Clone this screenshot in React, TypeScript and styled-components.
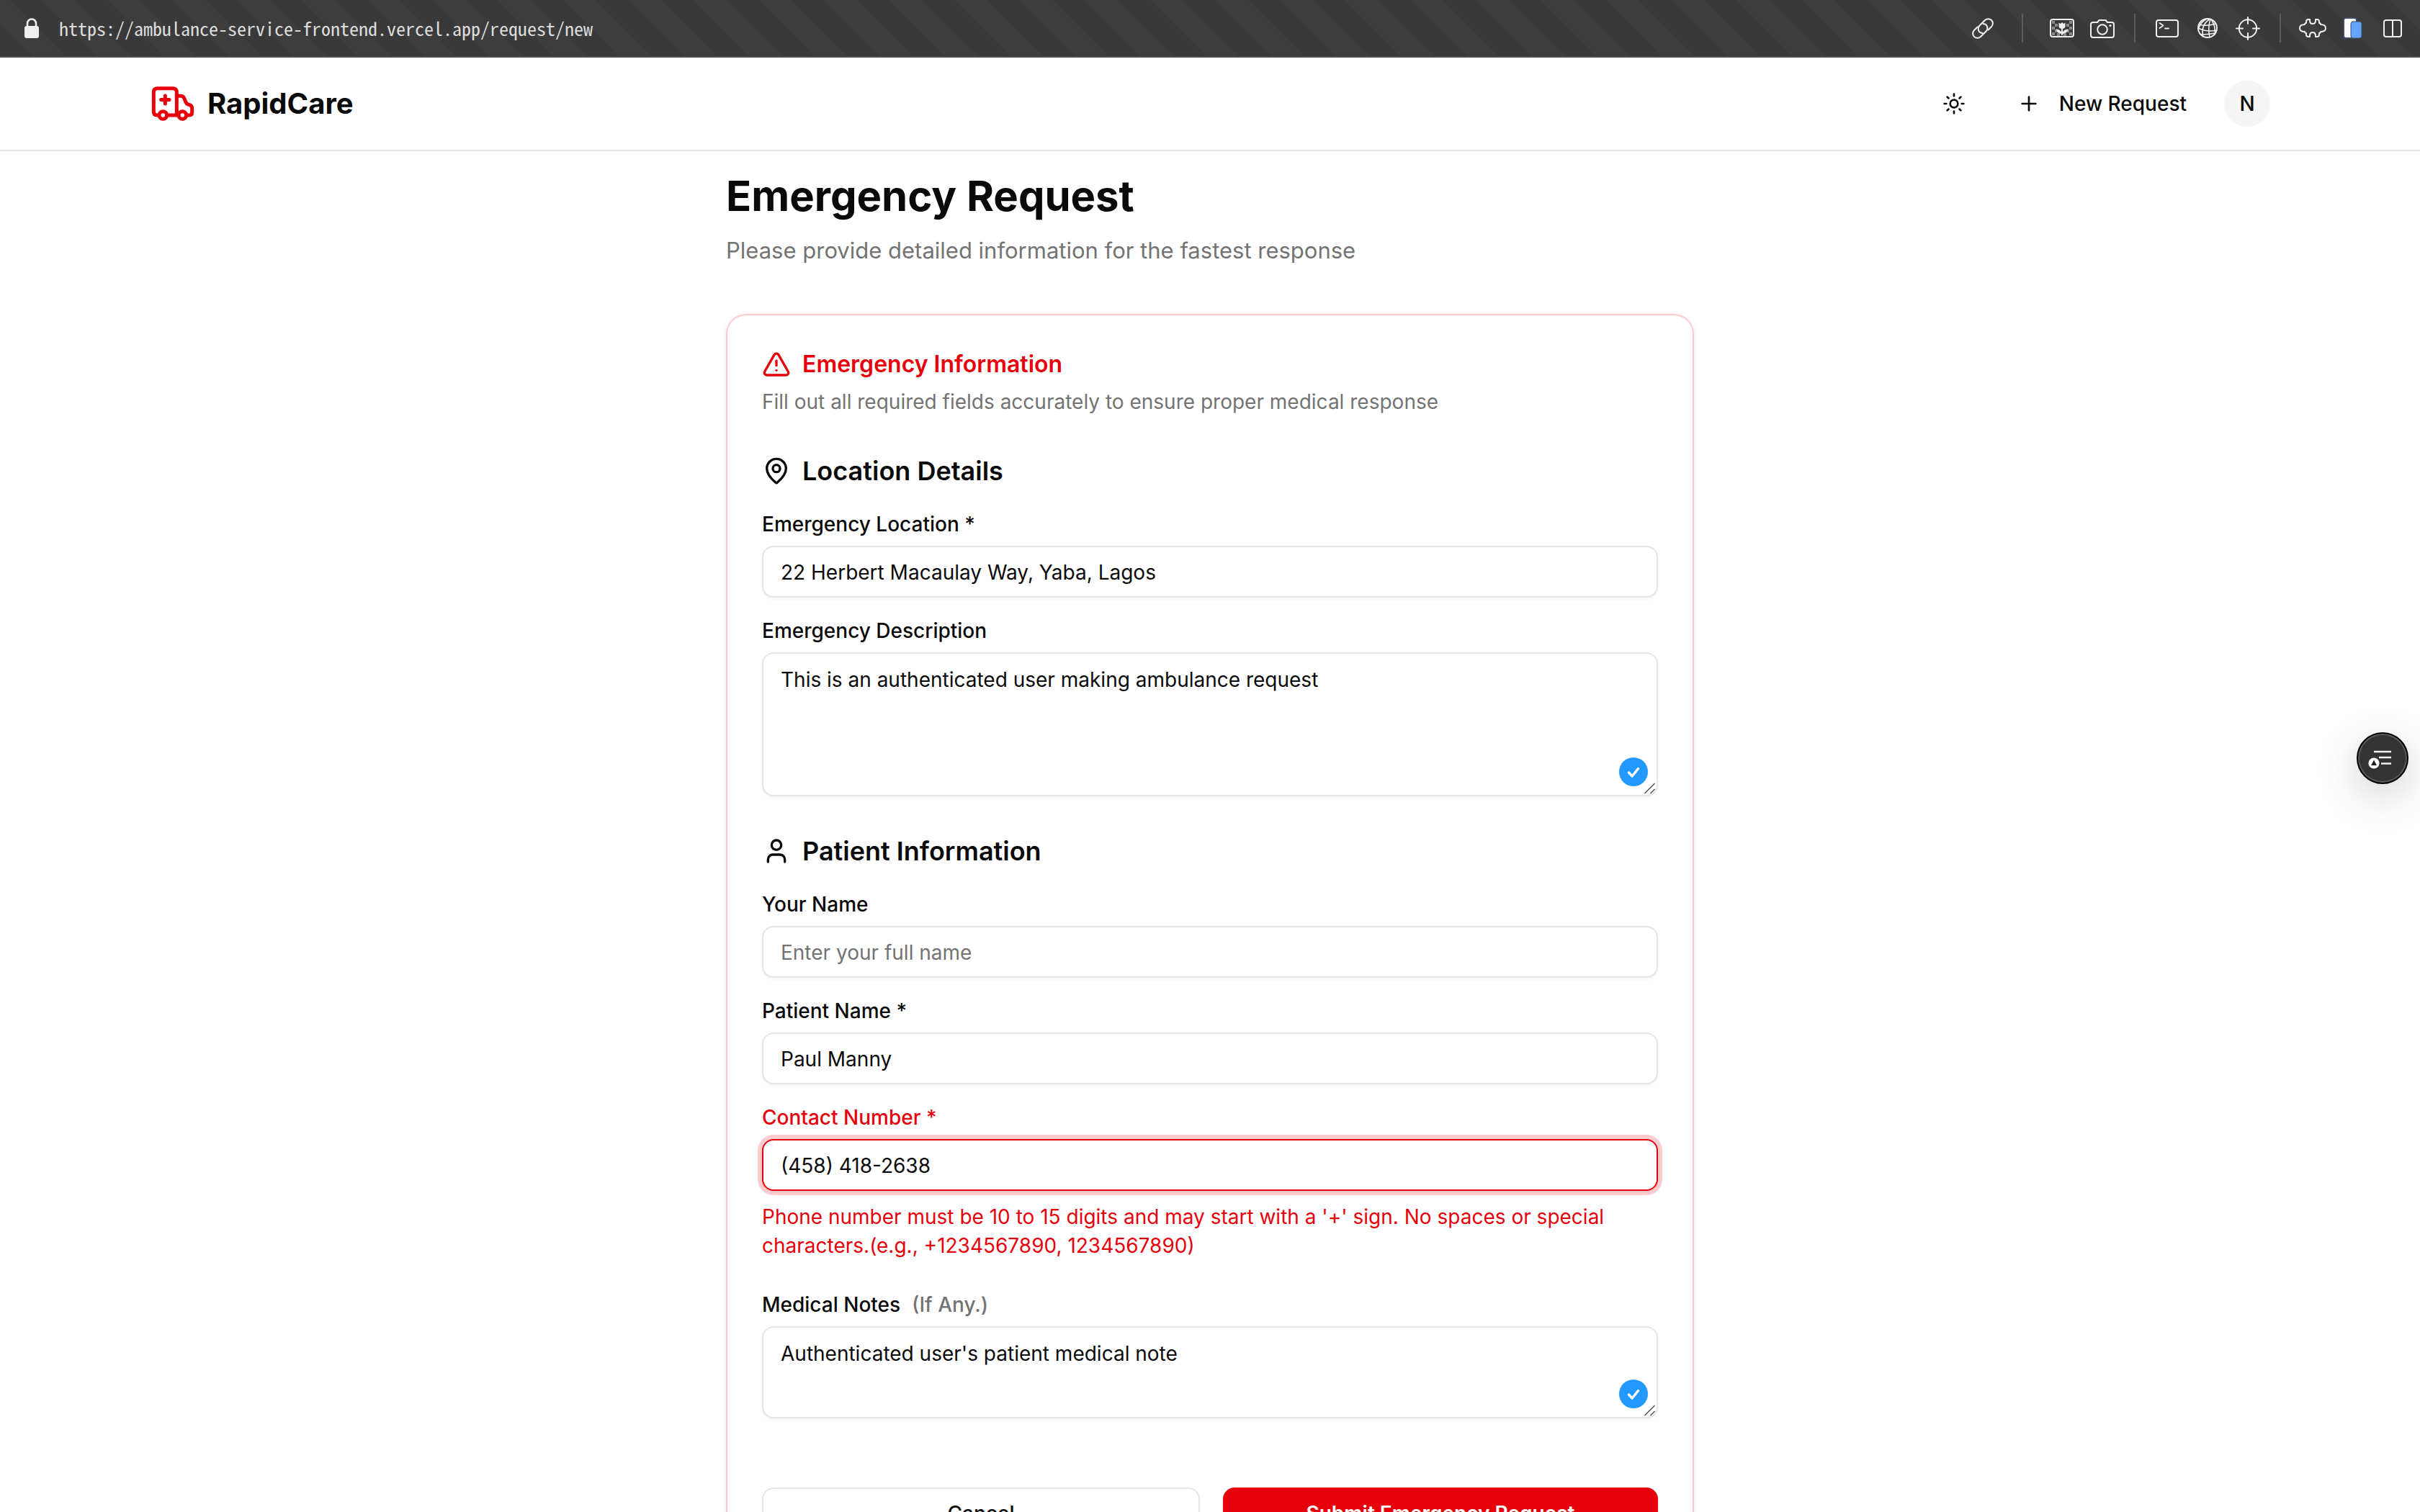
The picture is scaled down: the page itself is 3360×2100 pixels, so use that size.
import React, { useState } from 'react';
import styled, { createGlobalStyle } from 'styled-components';
import { MapPin, Plus, Sun, TriangleAlert, User } from 'lucide-react';

const color = {
  text: '#0a0a0a',
  muted: '#737373',
  red: '#e7000b',
  border: '#e5e5e5',
  cardBorder: '#ffc9c9',
  soft: '#f5f5f5',
  blue: '#2399ff',
};

const GlobalStyle = createGlobalStyle`
  *, *::before, *::after { box-sizing: border-box; }
  body {
    margin: 0;
    background: #fff;
    color: ${color.text};
    font-family: Inter, "Liberation Sans", sans-serif;
    font-size: 28px;
    line-height: 40px;
    -webkit-font-smoothing: antialiased;
  }
  h1, h2, h3, p { margin: 0; }
  button, input, textarea { font: inherit; color: inherit; }
`;

const Shell = styled.div`
  display: flex;
  flex-direction: column;
  height: 100vh;
  overflow: hidden;
`;

const AddressBar = styled.div`
  display: flex;
  flex: none;
  align-items: center;
  height: 80px;
  padding: 0 17px 0 32px;
  border-bottom: 2px solid #4d4d4d;
  color: #efefef;
  background: repeating-linear-gradient(45deg, #393939 0 32px, #3d3d3d 32px 64px);
`;

const Address = styled.div`
  flex: 1;
  margin-left: 26px;
  color: #dcdcdc;
  font-family: "Noto Sans Mono CJK SC", "DejaVu Sans Mono", monospace;
  font-size: 26px;
  line-height: 32px;
  white-space: nowrap;
`;

const Tools = styled.div`
  display: flex;
  align-items: center;
  gap: 16px;
`;

const ToolButton = styled.button`
  display: flex;
  width: 40px;
  height: 40px;
  padding: 0;
  border: 0;
  background: none;
`;

const ToolDivider = styled.span<{ $space: number }>`
  width: 2px;
  height: 40px;
  margin: 0 ${(p) => p.$space}px;
  background: #5c5c5c;
`;

const Header = styled.header`
  flex: none;
  border-bottom: 2px solid ${color.border};
`;

const HeaderInner = styled.div`
  display: flex;
  align-items: center;
  justify-content: space-between;
  max-width: 3072px;
  height: 128px;
  margin: 0 auto;
  padding: 0 64px;
`;

const Brand = styled.a`
  display: flex;
  align-items: center;
  gap: 16px;
  color: inherit;
  font-size: 40px;
  font-weight: 700;
  line-height: 56px;
  text-decoration: none;
`;

const Nav = styled.nav`
  display: flex;
  align-items: center;
  gap: 28px;
`;

const IconButton = styled.button`
  display: flex;
  align-items: center;
  justify-content: center;
  width: 72px;
  height: 72px;
  padding: 0;
  border: 0;
  background: none;
`;

const NavLink = styled.a`
  display: flex;
  align-items: center;
  gap: 26px;
  height: 72px;
  padding: 0 24px;
  color: inherit;
  font-weight: 500;
  text-decoration: none;
`;

const Avatar = styled.button`
  width: 64px;
  height: 64px;
  padding: 0;
  border: 0;
  border-radius: 50%;
  background: ${color.soft};
  font-weight: 500;
`;

const Main = styled.main`
  flex: 1;
  min-height: 0;
  overflow: hidden;
  padding: 26px 32px 64px;
`;

const Column = styled.div`
  max-width: 1344px;
  margin: 0 auto;
`;

const PageTitle = styled.h1`
  font-size: 58px;
  font-weight: 700;
  line-height: 72px;
`;

const PageLead = styled.p`
  margin-top: 16px;
  color: ${color.muted};
  font-size: 31px;
  line-height: 48px;
`;

const Card = styled.section`
  margin-top: 64px;
  padding: 48px;
  border: 2px solid ${color.cardBorder};
  border-radius: 28px;
  box-shadow: 0 2px 6px rgba(0, 0, 0, 0.1);
`;

const CardTitle = styled.h2`
  display: flex;
  align-items: center;
  gap: 16px;
  color: ${color.red};
  font-size: 32px;
  font-weight: 600;
  line-height: 40px;
`;

const CardLead = styled.p`
  margin-top: 12px;
  color: ${color.muted};
`;

const Form = styled.form`
  display: flex;
  flex-direction: column;
  gap: 48px;
  margin-top: 48px;
`;

const Group = styled.div`
  display: flex;
  flex-direction: column;
  gap: 32px;
`;

const GroupTitle = styled.h3`
  display: flex;
  align-items: center;
  gap: 16px;
  font-size: 36px;
  font-weight: 600;
  line-height: 56px;
`;

const FieldBox = styled.div`
  display: flex;
  flex-direction: column;
  gap: 16px;
`;

const Label = styled.label<{ $invalid?: boolean }>`
  display: flex;
  gap: 16px;
  color: ${(p) => (p.$invalid ? color.red : 'inherit')};
  font-weight: 500;
  line-height: 28px;
`;

const Hint = styled.span`
  color: ${color.muted};
`;

const TextBox = styled.input<{ $invalid?: boolean }>`
  width: 100%;
  height: 72px;
  padding: 2px 24px 0;
  border: 2px solid ${(p) => (p.$invalid ? color.red : color.border)};
  border-radius: 16px;
  outline: 0;
  background: #fff;
  box-shadow: ${(p) => (p.$invalid ? '0 0 0 6px rgba(231, 0, 11, 0.2), ' : '')}0 2px 4px rgba(0, 0, 0, 0.05);
  &::placeholder { color: ${color.muted}; opacity: 1; }
`;

const AreaWrap = styled.div`
  position: relative;
  display: flex;
`;

const Area = styled.textarea<{ $height: number }>`
  width: 100%;
  height: ${(p) => p.$height}px;
  padding: 16px 24px;
  border: 2px solid ${color.border};
  border-radius: 16px;
  outline: 0;
  background: #fff;
  box-shadow: 0 2px 4px rgba(0, 0, 0, 0.05);
  resize: none;
`;

const CheckBadge = styled.span`
  position: absolute;
  right: 14px;
  bottom: 14px;
  display: flex;
  width: 40px;
  height: 40px;
  border-radius: 50%;
  background: ${color.blue};
`;

const Grip = styled.svg`
  position: absolute;
  right: 2px;
  bottom: 2px;
`;

const ErrorText = styled.p`
  color: ${color.red};
`;

const Actions = styled.div`
  display: flex;
  gap: 32px;
  padding-top: 48px;
`;

const ActionButton = styled.button<{ $primary?: boolean }>`
  flex: 1;
  height: 72px;
  border: ${(p) => (p.$primary ? '0' : `2px solid ${color.border}`)};
  border-radius: 16px;
  background: ${(p) => (p.$primary ? color.red : '#fff')};
  color: ${(p) => (p.$primary ? '#fff' : color.text)};
  font-weight: ${(p) => (p.$primary ? 600 : 500)};
`;

const FloatingButton = styled.button`
  position: fixed;
  top: calc(50% - 33px);
  right: 16px;
  display: flex;
  width: 72px;
  height: 72px;
  padding: 0;
  border: 2px solid #000;
  border-radius: 50%;
  background: #333;
  box-shadow: inset 0 0 0 2px #5a5a5a, 0 16px 60px rgba(0, 0, 0, 0.2);
`;

const LockIcon = () => (
  <svg width="24" height="32" viewBox="0 0 24 32" fill="none">
    <rect x="2" y="13" width="20" height="17" rx="3" fill="#efefef" />
    <path d="M6 14V9.5a6 6 0 0 1 12 0V14" stroke="#efefef" strokeWidth="2.6" />
  </svg>
);

const AmbulanceIcon = () => (
  <svg
    width="64"
    height="64"
    viewBox="54 36 192 192"
    fill="none"
    stroke={color.red}
    strokeWidth="15"
    strokeLinecap="round"
    strokeLinejoin="round"
  >
    <path d="M90 180h-6q-14 0-14-14V84q0-16 16-16h64q16 0 16 16v92" />
    <path d="M127 180h44" />
    <path d="M166 100h17q10 0 14 9l7 17q3 7 10 9l6 2q10 4 10 14v17q0 12-12 12h-8" />
    <circle cx="109" cy="180" r="16" />
    <circle cx="190" cy="180" r="16" />
    <path d="M118 99v33M101 115.500h34" />
  </svg>
);

type GlyphProps = { children: React.ReactNode };

const Glyph = ({ children }: GlyphProps) => (
  <svg
    width="40"
    height="40"
    viewBox="0 0 40 40"
    fill="none"
    stroke="#efefef"
    strokeWidth="2"
    strokeLinecap="round"
    strokeLinejoin="round"
  >
    {children}
  </svg>
);

const LinkGlyph = () => (
  <Glyph>
    <path d="M12.500 18.500 8 23a6.300 6.300 0 0 0 9 9l7.500-7.500a6.300 6.300 0 0 0 0-9q-1.500-1.300-4-1.500" />
    <path d="M27.500 22.500 32 18a6.300 6.300 0 0 0-9-9l-7.500 7.500a6.300 6.300 0 0 0 0 9q1.500 1.300 4 1.500" />
  </Glyph>
);

const checks = [
  [7, 11], [31, 11], [11, 15], [27, 15], [7, 19], [31, 19],
  [11, 23], [27, 23], [7, 27], [31, 27], [23, 28], [14, 28],
];

const ImageGlyph = () => (
  <Glyph>
    {checks.map(([x, y]) => (
      <rect key={`${x}-${y}`} x={x - 1} y={y - 1} width="4" height="4" fill="#8a8a8a" stroke="none" />
    ))}
    <rect x="4" y="8" width="32" height="24" rx="3" />
    <path d="M15.500 12.500l2.500 1.500 2-2 2 2 2.500-1.500v4.500q0 4-4.500 4t-4.500-4z" fill="#efefef" stroke="none" />
    <path d="M20 20v9" />
    <path d="M20 28q-7 0-8.500-6.500 7 0 8.500 6.500zM20 28q7 0 8.500-6.500-7 0-8.500 6.500z" fill="#efefef" stroke="none" />
  </Glyph>
);

const CameraGlyph = () => (
  <Glyph>
    <path d="M7 12h6l2.500-3h9l2.500 3h6q3 0 3 3v15q0 3-3 3H7q-3 0-3-3V15q0-3 3-3z" />
    <circle cx="20" cy="22" r="6.800" />
    <circle cx="31" cy="16.500" r="1.600" fill="#efefef" stroke="none" />
  </Glyph>
);

const TerminalGlyph = () => (
  <Glyph>
    <rect x="5" y="9" width="30" height="23" rx="3" />
    <path d="M9.500 13l5 3.500-5 3.500M17 20.500h5" strokeWidth="1.800" />
  </Glyph>
);

const GlobeGlyph = () => (
  <Glyph>
    <circle cx="20" cy="20" r="13" />
    <path
      strokeWidth="1.600"
      d="M23 7.500q-13 9-9 24.500M24 7.500q-4 13-1 25M25 8q7 10 5 21M19 7.300q-8 4-11 12M8.500 15q9 3 23-1M7.300 20q11 6 25 3M11 29q9 0 20-2"
    />
  </Glyph>
);

const TargetGlyph = () => (
  <Glyph>
    <circle cx="20" cy="20.500" r="12.200" />
    <path d="M20 5v9M20 27v9M4 20.500h9M27 20.500h9" />
  </Glyph>
);

const PuzzleGlyph = () => (
  <Glyph>
    <path d="M9 15q0-2 2-2V11q0-3 3-3h2v1.500q0 4.500 4 4.500t4-4.500V8h2q3 0 3 3v2q2 0 2 2 7 0 7 5t-7 5q0 2-2 2v2q0 3-3 3h-2v-1.500q0-4.500-4-4.500t-4 4.500V32h-2q-3 0-3-3v-2q-2 0-2-2-7 0-7-5t7-5z" />
  </Glyph>
);

const DocsGlyph = () => (
  <Glyph>
    <rect x="7" y="6" width="18" height="28" rx="3" fill="#fff" stroke="#3f4c66" />
    <rect x="17" y="11" width="15" height="23" rx="3" fill="#62a4ff" stroke="#3f4c66" strokeWidth="1" />
  </Glyph>
);

const SplitGlyph = () => (
  <Glyph>
    <rect x="7" y="9" width="24" height="23" rx="3" />
    <path d="M19 9v23" />
  </Glyph>
);

const StackIcon = () => (
  <svg width="68" height="68" viewBox="0 0 68 68" fill="none">
    <path d="M22 25h24M29 33h17M32 41.500h14" stroke="#f0f0f0" strokeWidth="2.600" />
    <circle cx="22" cy="41" r="9" fill="#333" />
    <circle cx="22" cy="41" r="7.600" fill="#fff" />
    <path d="M22 36.500l4 7.500h-8z" fill="#222" />
  </svg>
);

type AreaFieldProps = { id: string; label: string; hint?: string; initial: string; height: number };

const AreaField = ({ id, label, hint, initial, height }: AreaFieldProps) => {
  const [value, setValue] = useState(initial);
  return (
    <FieldBox>
      <Label htmlFor={id}>
        {label}
        {hint && <Hint>{hint}</Hint>}
      </Label>
      <AreaWrap>
        <Area id={id} $height={height} value={value} onChange={(e) => setValue(e.target.value)} />
        <CheckBadge>
          <svg width="40" height="40" viewBox="0 0 40 40" fill="none" stroke="#fff" strokeWidth="3.400" strokeLinecap="round" strokeLinejoin="round">
            <path d="M13.500 21l4.700 5 8.300-10.500" />
          </svg>
        </CheckBadge>
        <Grip width="18" height="18" viewBox="0 0 18 18" stroke="#4a4a4a" strokeWidth="1.400">
          <path d="M1.500 16 15.500 2M9.500 16l6-6" />
        </Grip>
      </AreaWrap>
    </FieldBox>
  );
};

type TextFieldProps = { id: string; label: string; initial?: string; placeholder?: string; error?: string };

const TextField = ({ id, label, initial = '', placeholder, error }: TextFieldProps) => {
  const [value, setValue] = useState(initial);
  return (
    <FieldBox>
      <Label htmlFor={id} $invalid={!!error}>{label}</Label>
      <TextBox
        id={id}
        $invalid={!!error}
        aria-invalid={!!error}
        value={value}
        placeholder={placeholder}
        onChange={(e) => setValue(e.target.value)}
      />
      {error && <ErrorText>{error}</ErrorText>}
    </FieldBox>
  );
};

const phoneError =
  "Phone number must be 10 to 15 digits and may start with a '+' sign. No spaces or special characters.(e.g., +1234567890, 1234567890)";

export default function App() {
  return (
    <Shell>
      <GlobalStyle />
      <AddressBar>
        <LockIcon />
        <Address>https://ambulance-service-frontend.vercel.app/request/new</Address>
        <Tools>
          <ToolButton aria-label="Copy link"><LinkGlyph /></ToolButton>
          <ToolDivider $space={18} />
          <ToolButton aria-label="Images"><ImageGlyph /></ToolButton>
          <ToolButton aria-label="Capture"><CameraGlyph /></ToolButton>
          <ToolDivider $space={8} />
          <ToolButton aria-label="Console"><TerminalGlyph /></ToolButton>
          <ToolButton aria-label="Network"><GlobeGlyph /></ToolButton>
          <ToolButton aria-label="Inspect"><TargetGlyph /></ToolButton>
          <ToolDivider $space={8} />
          <ToolButton aria-label="Extensions"><PuzzleGlyph /></ToolButton>
          <ToolButton aria-label="Devices"><DocsGlyph /></ToolButton>
          <ToolButton aria-label="Split view"><SplitGlyph /></ToolButton>
        </Tools>
      </AddressBar>

      <Header>
        <HeaderInner>
          <Brand href="#home">
            <AmbulanceIcon />
            RapidCare
          </Brand>
          <Nav>
            <IconButton aria-label="Toggle theme"><Sun size={32} /></IconButton>
            <NavLink href="#new">
              <Plus size={32} />
              New Request
            </NavLink>
            <Avatar>N</Avatar>
          </Nav>
        </HeaderInner>
      </Header>

      <Main>
        <Column>
          <PageTitle>Emergency Request</PageTitle>
          <PageLead>Please provide detailed information for the fastest response</PageLead>
          <Card>
            <CardTitle>
              <TriangleAlert size={40} />
              Emergency Information
            </CardTitle>
            <CardLead>Fill out all required fields accurately to ensure proper medical response</CardLead>
            <Form onSubmit={(e) => e.preventDefault()}>
              <Group>
                <GroupTitle>
                  <MapPin size={40} />
                  Location Details
                </GroupTitle>
                <TextField id="location" label="Emergency Location *" initial="22 Herbert Macaulay Way, Yaba, Lagos" />
                <AreaField
                  id="description"
                  label="Emergency Description"
                  initial="This is an authenticated user making ambulance request"
                  height={200}
                />
              </Group>
              <Group>
                <GroupTitle>
                  <User size={40} />
                  Patient Information
                </GroupTitle>
                <TextField id="your-name" label="Your Name" placeholder="Enter your full name" />
                <TextField id="patient-name" label="Patient Name *" initial="Paul Manny" />
                <TextField id="contact" label="Contact Number *" initial="(458) 418-2638" error={phoneError} />
              </Group>
              <AreaField
                id="notes"
                label="Medical Notes"
                hint="(If Any.)"
                initial="Authenticated user's patient medical note"
                height={128}
              />
              <Actions>
                <ActionButton type="button">Cancel</ActionButton>
                <ActionButton type="submit" $primary>Submit Emergency Request</ActionButton>
              </Actions>
            </Form>
          </Card>
        </Column>
      </Main>

      <FloatingButton aria-label="Open panel"><StackIcon /></FloatingButton>
    </Shell>
  );
}
